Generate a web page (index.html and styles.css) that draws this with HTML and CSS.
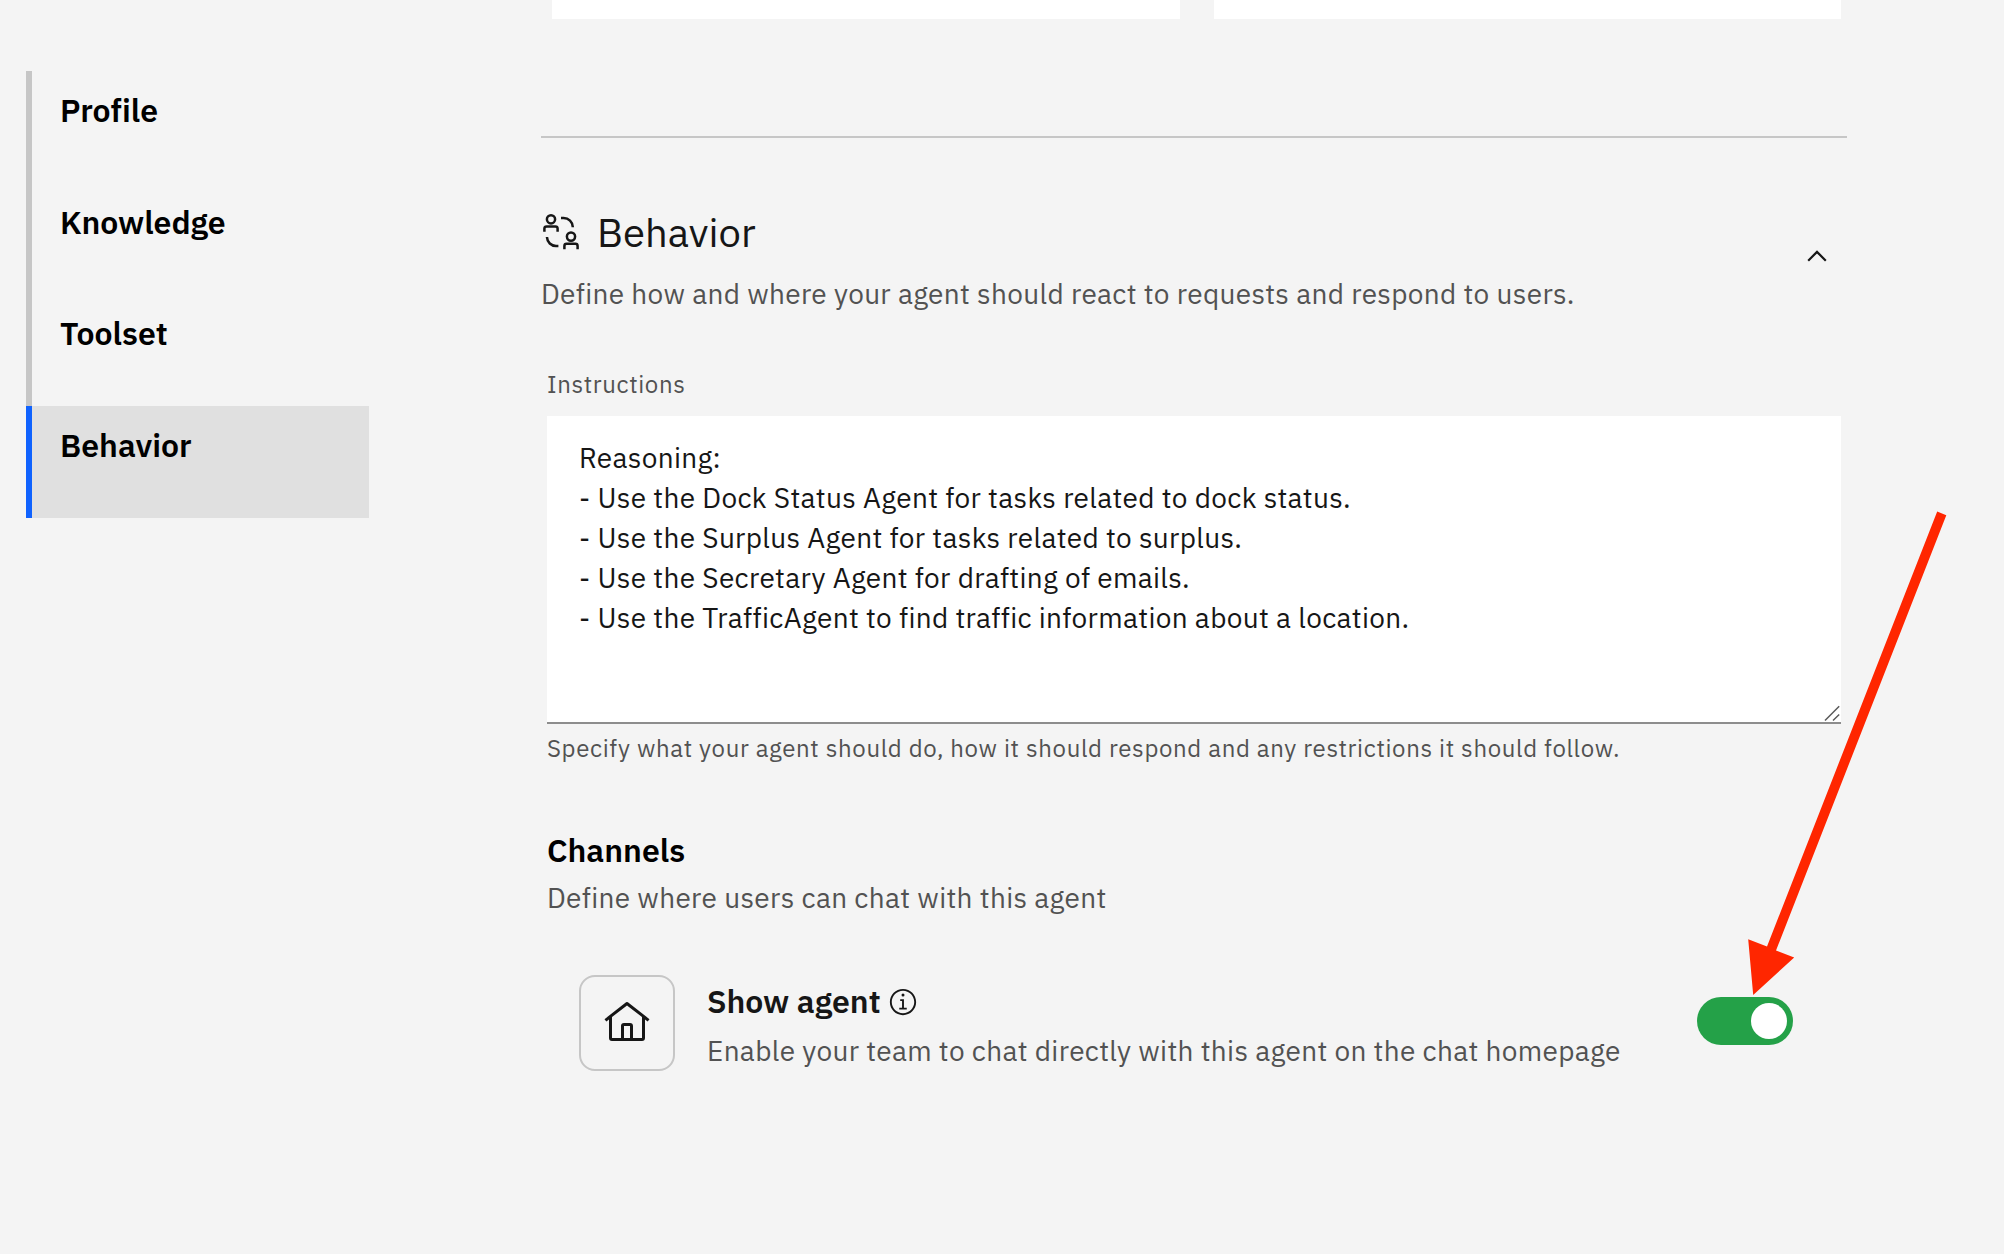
FILE: index.html
```html
<!DOCTYPE html>
<html lang="en">
<head>
<meta charset="utf-8">
<title>Agent builder</title>
<link rel="stylesheet" href="styles.css">
</head>
<body>
<nav class="side-nav">
  <a class="side-link">Profile</a>
  <a class="side-link">Knowledge</a>
  <a class="side-link">Toolset</a>
  <a class="side-link active">Behavior</a>
</nav>
<main class="content">
  <div class="cards"><div class="card"></div><div class="card"></div></div>
  <hr class="divider">
  <header class="section-head">
    <div class="section-text">
      <div class="title-row">
        <svg class="title-icon" width="38" height="38" viewBox="0 0 38 38" fill="none" stroke="#161616" stroke-width="2.5">
          <circle cx="9" cy="6.3" r="4.1"/>
          <path d="M2.4 18.8V15.600a2.200 2.200 0 0 1 2.200-2.200h8.800a2.200 2.200 0 0 1 2.200 2.200v3.200"/>
          <path d="M19 5h2.600a9.200 9.200 0 0 1 9.200 9v.200M5 24v.4a9 9 0 0 0 9 8.600h2.400"/>
          <circle cx="29" cy="23.600" r="4.100"/>
          <path d="M22.400 36.200V33a2.200 2.200 0 0 1 2.200-2.200h8.800a2.200 2.200 0 0 1 2.200 2.200v3.200"/>
        </svg>
        <h1 class="title">Behavior</h1>
      </div>
      <p class="body-text">Define how and where your agent should react to requests and respond to users.</p>
    </div>
    <svg class="chevron" width="32" height="32" viewBox="0 0 32 32" fill="none" stroke="#161616" stroke-width="2.2"><path d="M7.200 20.700 16 11.900l8.800 8.800"/></svg>
  </header>
  <section class="instructions">
    <div class="small-text">Instructions</div>
    <div class="editor">
      <p>Reasoning:</p>
      <p>- Use the Dock Status Agent for tasks related to dock status.</p>
      <p>- Use the Surplus Agent for tasks related to surplus.</p>
      <p>- Use the Secretary Agent for drafting of emails.</p>
      <p>- Use the TrafficAgent to find traffic information about a location.</p>
      <svg class="resize-handle" width="18" height="18" viewBox="0 0 18 18" fill="none" stroke="#5a5a5a" stroke-width="1.5"><path d="M2 16.500 16.200 2.300M10 16.500l6.200-6"/></svg>
    </div>
    <div class="small-text helper">Specify what your agent should do, how it should respond and any restrictions it should follow.</div>
  </section>
  <section class="channels">
    <h2 class="subhead">Channels</h2>
    <p class="body-text channels-note">Define where users can chat with this agent</p>
    <div class="channel">
      <div class="channel-icon">
        <svg width="48" height="48" viewBox="0 0 32 32" fill="#161616"><path d="M16.612 2.214a1.010 1.010 0 0 0-1.243 0L1 13.419l1.243 1.572L4 13.621V26a2.004 2.004 0 0 0 2 2h20a2.004 2.004 0 0 0 2-2V13.630L29.757 15 31 13.428ZM18 26h-4v-8h4Zm2 0v-8a2.002 2.002 0 0 0-2-2h-4a2.002 2.002 0 0 0-2 2v8H6V12.062l10-7.790 10 7.800V26Z"/></svg>
      </div>
      <div class="channel-text">
        <div class="channel-name">
          <span class="name-text">Show agent</span>
          <svg class="info-icon" width="30" height="30" viewBox="0 0 16 16" fill="#161616"><path d="M8.500 11V6.500h-2v1h1V11H6v1h4v-1zM8 3.500a.8.8 0 1 0 0 1.600.8.8 0 0 0 0-1.600z"/><path d="M8 15c-3.900 0-7-3.100-7-7s3.100-7 7-7 7 3.100 7 7-3.100 7-7 7zM8 2C4.700 2 2 4.700 2 8s2.700 6 6 6 6-2.700 6-6-2.700-6-6-6z"/></svg>
        </div>
        <p class="body-text channel-note">Enable your team to chat directly with this agent on the chat homepage</p>
      </div>
      <div class="toggle"><div class="knob"></div></div>
    </div>
  </section>
</main>
<svg class="pointer-arrow" width="204" height="490" viewBox="1747 508 204 490" fill="#ff2600"><path d="M1937.200 511.500 1946.300 515.200 1776 950.500 1794.200 957.500 1753.200 995 1748.200 939.300 1767 946.500Z"/></svg>
</body>
</html>
```
FILE: styles.css
```css
* { box-sizing: border-box; margin: 0; padding: 0; }
body {
  width: 2004px;
  height: 1254px;
  overflow: hidden;
  position: relative;
  display: flex;
  align-items: flex-start;
  gap: 172px;
  padding-left: 26px;
  background: #f4f4f4;
  color: #161616;
  font-family: "IBM Plex Sans", Roboto, sans-serif;
  font-variant-ligatures: none;
}
.side-nav {
  width: 343px;
  margin-top: 71px;
  display: grid;
  grid-template-rows: 112px 111px 112px 112px;
}
.side-link {
  border-left: 6px solid #c6c6c6;
  padding: 19px 0 0 28px;
  font-size: 32px;
  font-weight: 600;
  line-height: 40px;
  color: #000;
}
.side-link.active { border-left-color: #0f62fe; background: #e0e0e0; }

.content { width: 1306px; }
.cards { display: flex; gap: 34px; padding: 0 6px 0 11px; }
.card { flex: 1; height: 19px; background: #fff; }
.divider { margin-top: 117px; height: 2px; border: 0; background: #c6c6c6; }

.section-head {
  display: flex;
  justify-content: space-between;
  align-items: flex-start;
  padding: 70px 14px 0 0;
}
.title-row { display: flex; align-items: center; gap: 17px; height: 48px; }
.title-icon { margin-left: 1px; }
.title { font-size: 40px; font-weight: 400; line-height: 48px; }
.body-text { font-size: 28px; line-height: 36px; letter-spacing: 0.320px; color: #525252; }
.section-text .body-text { margin-top: 20px; }
.chevron { margin-top: 32px; }

.instructions { padding: 56px 6px 0; }
.small-text { font-size: 24px; line-height: 32px; letter-spacing: 0.640px; color: #525252; }
.editor {
  position: relative;
  height: 308px;
  margin-top: 16px;
  padding: 22px 32px 0;
  background: #fff;
  border-bottom: 2px solid #8d8d8d;
  font-size: 28px;
  line-height: 40px;
  letter-spacing: 0.320px;
}
.resize-handle { position: absolute; right: 0; bottom: 0; }
.helper { margin-top: 8px; }

.channels { padding: 66px 6px 0; }
.subhead { font-size: 32px; font-weight: 600; line-height: 40px; color: #000; }
.channels-note { margin-top: 10px; }
.channel { display: flex; align-items: flex-start; margin-top: 59px; padding: 0 48px 0 32px; }
.channel-icon {
  width: 96px;
  height: 96px;
  display: grid;
  place-items: center;
  border: 2px solid #c6c6c6;
  border-radius: 16px;
}
.channel-text { flex: 1; margin-left: 32px; padding-top: 6px; }
.channel-name { display: flex; align-items: center; gap: 7px; height: 40px; }
.info-icon { margin-top: 2px; }
.name-text { font-size: 32px; font-weight: 600; line-height: 40px; }
.channel-note { margin-top: 12px; }
.toggle {
  width: 96px;
  height: 48px;
  margin-top: 22px;
  padding: 6px;
  display: flex;
  justify-content: flex-end;
  border-radius: 24px;
  background: #24a148;
}
.knob { width: 36px; height: 36px; border-radius: 50%; background: #fff; }

.pointer-arrow { position: absolute; left: 1747px; top: 508px; }
```
